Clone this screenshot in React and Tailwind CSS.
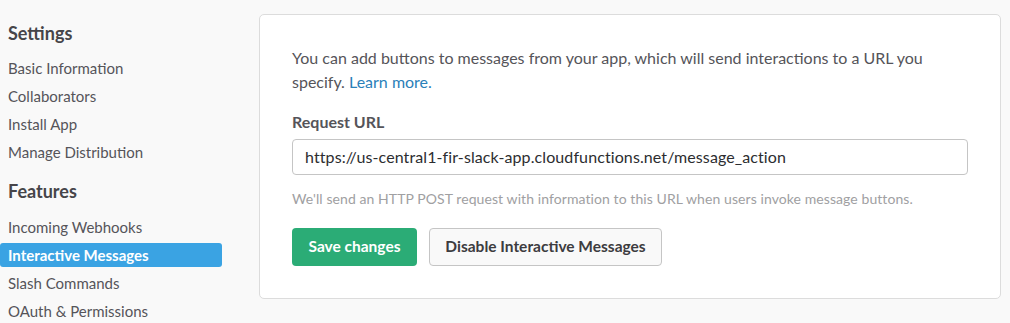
import React from "react";

const Item = ({ children, active }) => (
  <div
    className={
      "h-[24px] leading-[24px] pl-[8px] text-[15px] rounded-[3px] " +
      (active ? "bg-[#3aa3e3] text-white font-bold" : "text-[#555459]")
    }
  >
    {children}
  </div>
);

export default function App() {
  return (
    <div
      className="w-[1010px] h-[323px] overflow-hidden bg-[#f9f9f9] flex"
      style={{ fontFamily: "Lato, 'Noto Sans', sans-serif" }}
    >
      <div className="w-[222px] shrink-0 flex flex-col">
        <div className="mt-[21px] h-[24px] leading-[24px] pl-[8px] text-[18px] font-bold text-[#464549]">
          Settings
        </div>
        <div className="mt-[11px] flex flex-col gap-[4px]">
          <Item>Basic Information</Item>
          <Item>Collaborators</Item>
          <Item>Install App</Item>
          <Item>Manage Distribution</Item>
        </div>
        <div className="mt-[15px] h-[24px] leading-[24px] pl-[8px] text-[18px] font-bold text-[#464549]">
          Features
        </div>
        <div className="mt-[12px] flex flex-col gap-[4px]">
          <Item>Incoming Webhooks</Item>
          <Item active>Interactive Messages</Item>
          <Item>Slash Commands</Item>
          <Item>OAuth &amp; Permissions</Item>
        </div>
      </div>
      <div className="ml-[37px] mr-[9px] mt-[14px] h-[285px] flex-1 bg-white border border-[#dcdcdc] rounded-[5px] px-[32px] pt-[31px]">
        <p className="text-[16px] leading-[24px] text-[#555459]">
          You can add buttons to messages from your app, which will send interactions to a URL you
          specify. <a className="text-[#2a80b9]">Learn more.</a>
        </p>
        <div className="mt-[16px] text-[16px] leading-[24px] font-bold text-[#555459]">
          Request URL
        </div>
        <div className="mt-[5px] h-[36px] border border-[#c5c5c5] rounded-[4px] flex items-center pl-[12px] text-[16px] tracking-[0.1px] text-[#2c2d30]">
          https://us-central1-fir-slack-app.cloudfunctions.net/message_action
        </div>
        <div className="mt-[14px] text-[14px] leading-[20px] tracking-[0.08px] text-[#a0a0a2]">
          We'll send an HTTP POST request with information to this URL when users invoke message buttons.
        </div>
        <div className="mt-[19px] flex gap-[12px]">
          <div className="h-[38px] w-[125px] rounded-[4px] bg-[#2bac76] text-white font-bold text-[15.5px] flex items-center justify-center">
            Save changes
          </div>
          <div className="h-[38px] w-[233px] rounded-[4px] bg-[#f9f9f9] border border-[#c5c5c5] text-[#3d3c40] font-bold text-[15.5px] flex items-center justify-center">
            Disable Interactive Messages
          </div>
        </div>
      </div>
    </div>
  );
}
